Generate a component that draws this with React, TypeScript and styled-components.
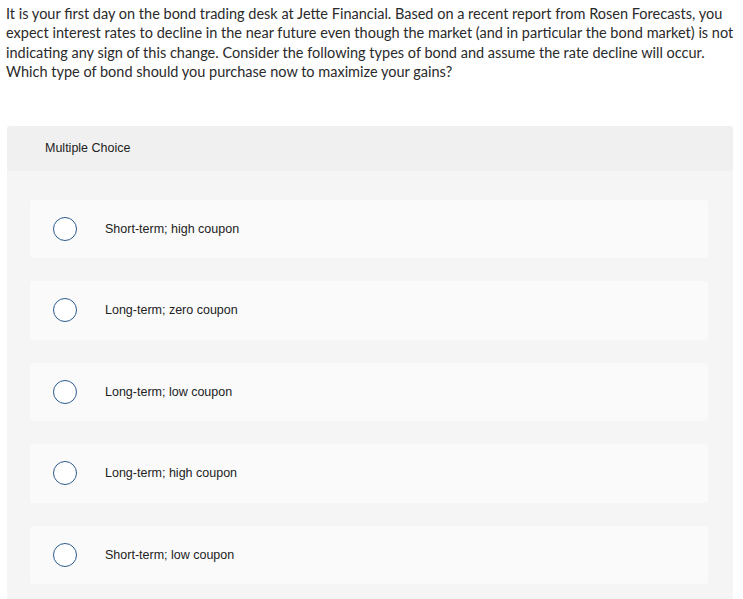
import React from "react";
import styled, { createGlobalStyle } from "styled-components";

const Global = createGlobalStyle`
  html, body { margin: 0; padding: 0; background: #ffffff; }
  body { font-family: "Liberation Sans", Arial, sans-serif; color: #222; }
`;

const Page = styled.div`
  padding: 4px 10px 0 7px;
`;

const Question = styled.p`
  margin: 0 -12px 44px -1px;
  font-family: Lato, "Liberation Sans", sans-serif;
  font-size: 14.5px;
  line-height: 19.4px;
  color: #2a2a2a;
`;

const Panel = styled.section`
  background: #f5f5f5;
  border-radius: 3px 3px 0 0;
  padding-bottom: 30px;
`;

const PanelHeader = styled.div`
  height: 45px;
  background: #f0f0f0;
  border-radius: 3px 3px 0 0;
  display: flex;
  align-items: center;
  padding-left: 38px;
  font-size: 12.5px;
  color: #222;
`;

const Options = styled.div`
  display: flex;
  flex-direction: column;
  gap: 23px;
  padding: 29px 25px 0 23px;
`;

const Option = styled.label`
  height: 58.5px;
  background: #fafafa;
  border-radius: 3px;
  display: flex;
  align-items: center;
  padding-left: 23px;
  gap: 28px;
  font-size: 12.5px;
  color: #222;
  cursor: pointer;
`;

const Radio = styled.span`
  width: 22px;
  height: 22px;
  border: 1.5px solid #2b5b8c;
  border-radius: 50%;
  background: #fff;
  flex: none;
`;

const options = [
  "Short-term; high coupon",
  "Long-term; zero coupon",
  "Long-term; low coupon",
  "Long-term; high coupon",
  "Short-term; low coupon",
];

export default function App() {
  return (
    <Page>
      <Global />
      <Question>
        It is your first day on the bond trading desk at Jette Financial. Based on a recent report from Rosen Forecasts, you
        expect interest rates to decline in the near future even though the market (and in particular the bond market) is not
        indicating any sign of this change. Consider the following types of bond and assume the rate decline will occur.
        Which type of bond should you purchase now to maximize your gains?
      </Question>
      <Panel>
        <PanelHeader>Multiple Choice</PanelHeader>
        <Options>
          {options.map((o) => (
            <Option key={o}>
              <Radio />
              {o}
            </Option>
          ))}
        </Options>
      </Panel>
    </Page>
  );
}
